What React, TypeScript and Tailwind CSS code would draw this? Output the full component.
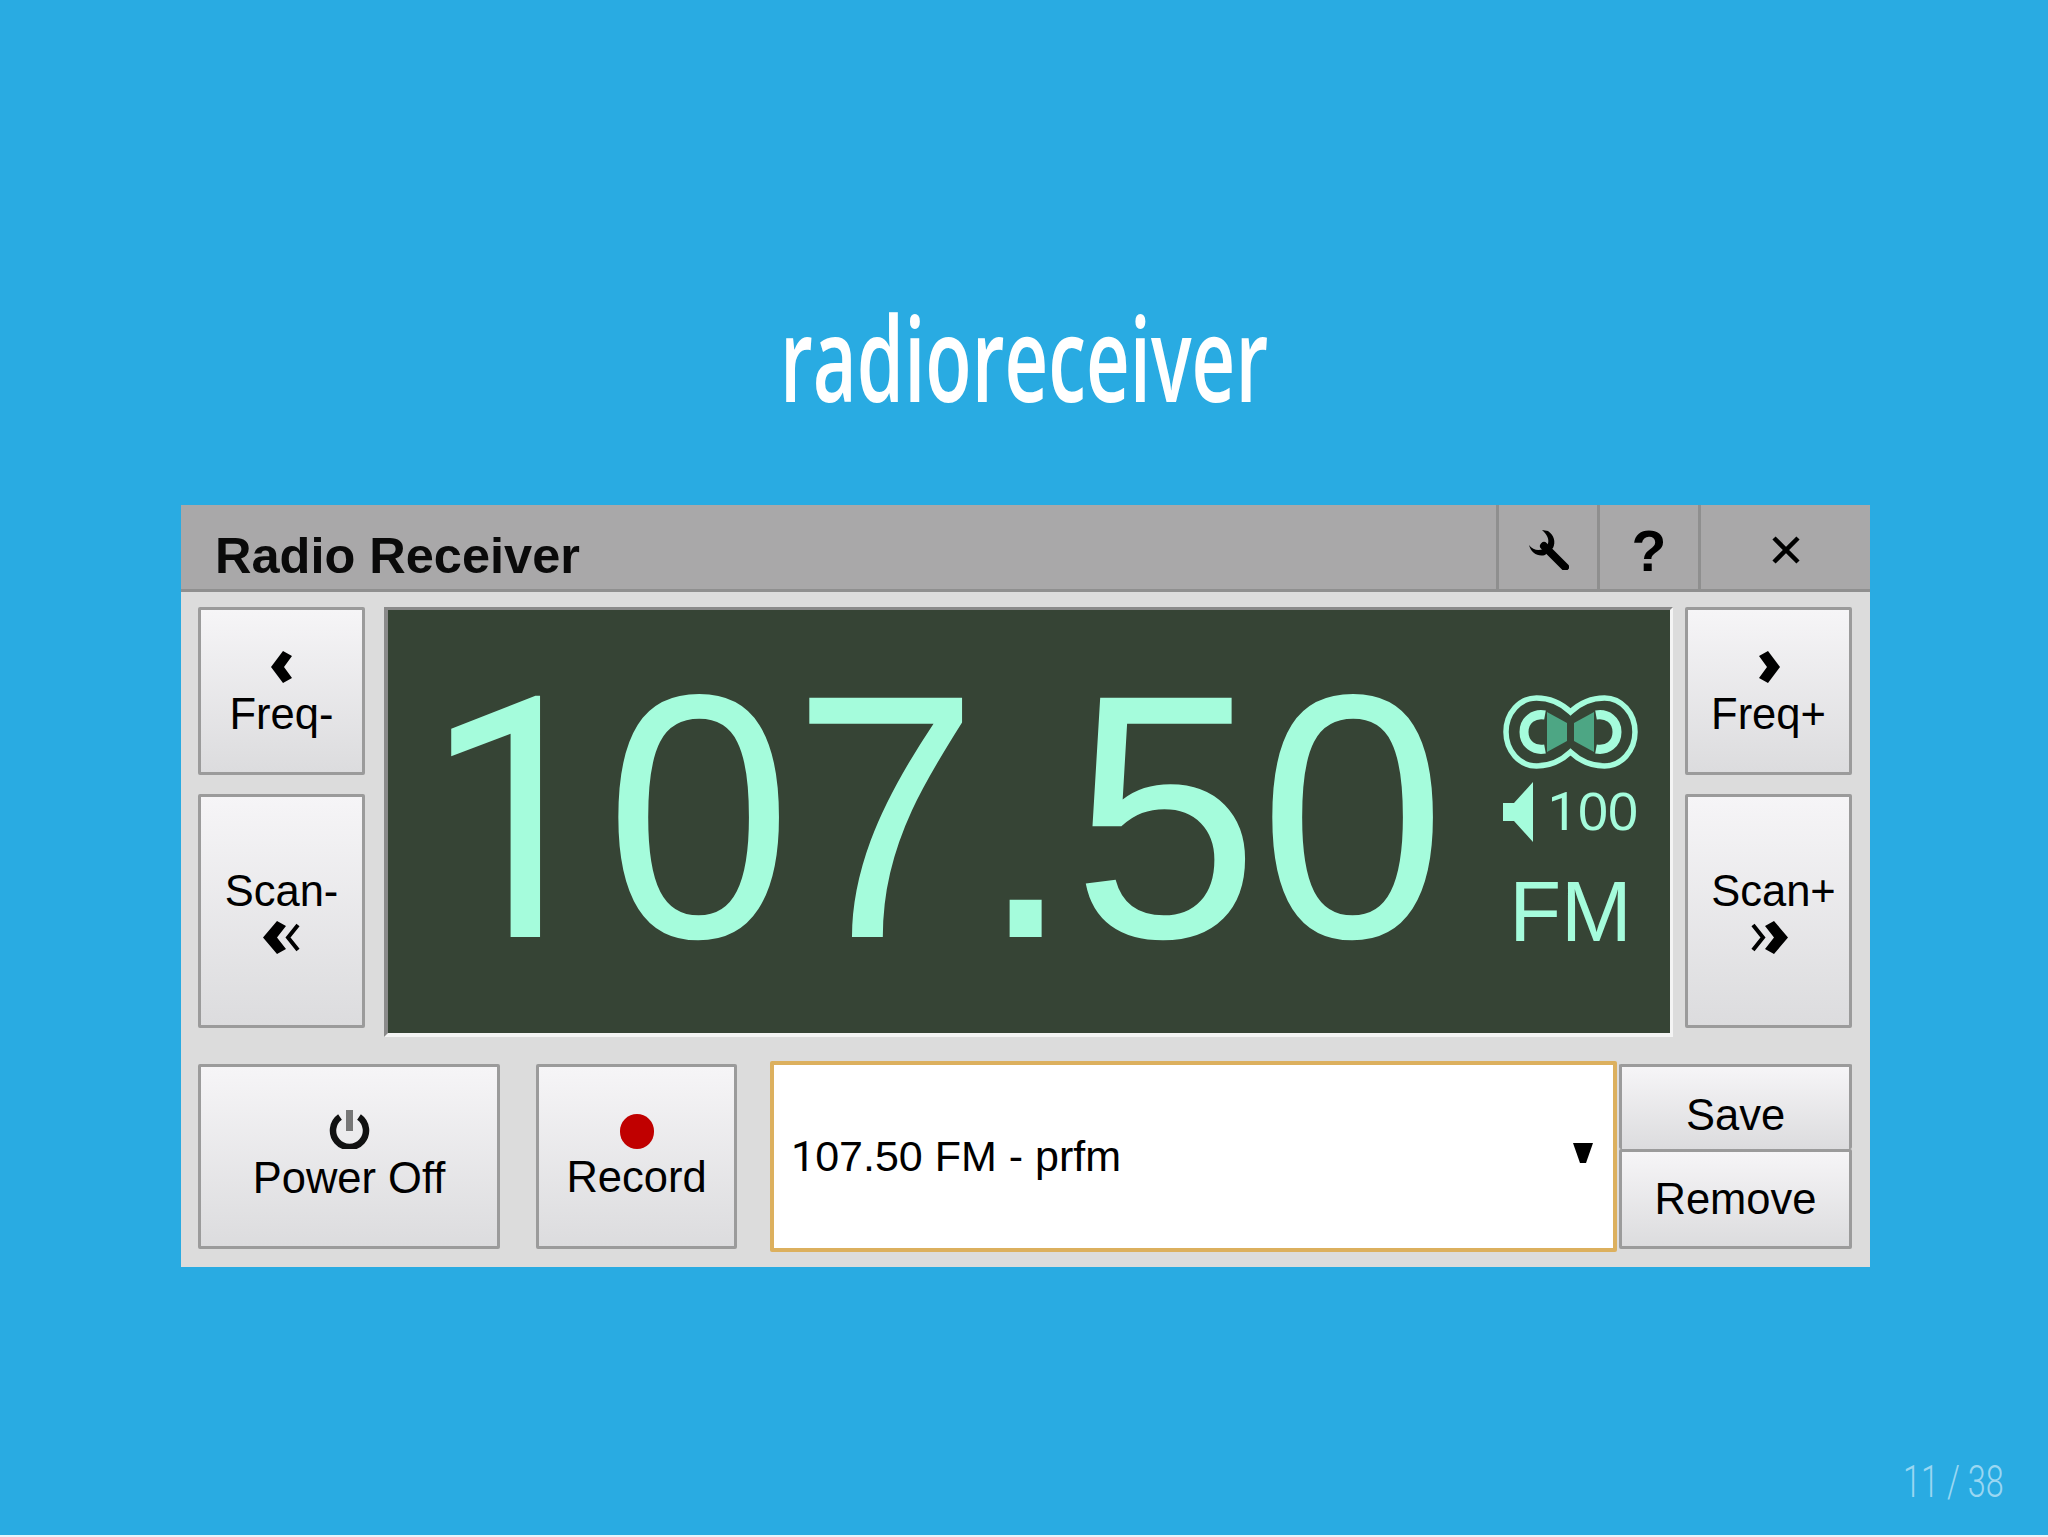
import type { ReactNode } from 'react';

const MINT = '#a5fcdc';

function PanelButton({ className, children }: { className: string; children: ReactNode }) {
  return (
    <div
      className={`flex flex-col items-center justify-center rounded-[2px] border-[3px] border-[#9b9b9b] bg-gradient-to-b from-[#f6f5f7] to-[#dcdcde] text-[43.5px] leading-[46px] text-black ${className}`}
    >
      {children}
    </div>
  );
}

// the panel font draws its 1 without a foot, Liberation does not
function One({ className = '' }: { className?: string }) {
  return <span className={`[font-family:Roboto,sans-serif] ${className}`}>1</span>;
}

function Chevron({ dir }: { dir: 'left' | 'right' }) {
  return (
    <svg width="22" height="32" viewBox="0 0 22 32" className={dir === 'right' ? 'mb-[8px] -scale-x-100' : 'mb-[8px]'}>
      <path d="M12 0 L21 5 L13 16 L21 27 L12 32 L0 16 Z" fill="#000" />
    </svg>
  );
}

function DoubleChevron({ dir }: { dir: 'left' | 'right' }) {
  return (
    <svg width="38" height="33" viewBox="0 0 38 33" className={dir === 'right' ? 'mt-[7px] -scale-x-100' : 'mt-[7px]'}>
      <path d="M14 0 L23 5 L14 16.5 L23 28 L14 33 L0 16.5 Z" fill="#000" />
      <path d="M35 4 L25 16.5 L35 29" fill="none" stroke="#000" strokeWidth="4" />
    </svg>
  );
}

function StereoIcon() {
  return (
    <svg width="135" height="74" viewBox="0 0 135 74">
      <path
        d="M67.5 17 C58 8 46 3 33.5 3 A30.5 34 0 0 0 33.5 71 C46 71 58 66 67.5 57 C77 66 89 71 101.5 71 A30.5 34 0 0 0 101.5 3 C89 3 77 8 67.5 17 Z"
        fill="none"
        stroke={MINT}
        strokeWidth="5.5"
      />
      <path d="M42 20 C31 18 21 25 21 37 C21 49 31 56 42 54" fill="none" stroke={MINT} strokeWidth="9" />
      <path d="M93 20 C104 18 114 25 114 37 C114 49 104 56 93 54" fill="none" stroke={MINT} strokeWidth="9" />
      <path d="M44 17 L64 28 L64 46 L44 57 Z" fill="#4da684" />
      <path d="M91 17 L71 28 L71 46 L91 57 Z" fill="#4da684" />
    </svg>
  );
}

export default function App() {
  return (
    <div className="flex h-[1537px] w-[2048px] flex-col overflow-hidden bg-[#29abe2] [font-family:'Liberation_Sans',Arial,sans-serif]">
      {/* slide title */}
      <div className="flex h-[505px] justify-center pt-[287px]">
        <h1 className="h-[140px] scale-x-[0.644] text-[118px] leading-[140px] font-semibold text-white [font-family:'Open_Sans',sans-serif]">
          radioreceiver
        </h1>
      </div>

      {/* radio window */}
      <div className="ml-[181px] w-[1689px] bg-[#dcdcdc]">
        <div className="flex h-[87px] border-b-[3px] border-[#8f8f8f] bg-[#a9a8a9]">
          <div className="flex-1 pt-[22px] pl-[34px] text-[50.5px] leading-[58px] font-bold text-[#0a0a0a]">Radio Receiver</div>
          <div className="flex w-[101px] items-start justify-center border-l-[3px] border-[#8f8f8f] pt-[24px]">
            <svg width="41" height="41" viewBox="0 0 41 41">
              <path d="M16 17 L37 38" stroke="#000" strokeWidth="8" strokeLinecap="round" />
              <path d="M1 16 C6 23 15 22 19 17 C22 12 20 6 14 1 L20 2 C26 6 28 13 25 19 L17 26 C10 28 3 24 1 16 Z" fill="#000" />
            </svg>
          </div>
          <div className="flex w-[101px] items-start justify-center border-l-[3px] border-[#8f8f8f] pt-[13px] text-[57px] leading-[66px] font-bold text-black">?</div>
          <div className="flex w-[172px] items-start justify-center border-l-[3px] border-[#8f8f8f] pt-[31px]">
            <svg width="28" height="28" viewBox="0 0 28 28">
              <path d="M2 2 L26 26 M26 2 L2 26" stroke="#000" strokeWidth="4.5" />
            </svg>
          </div>
        </div>

        <div className="flex flex-col gap-[24px] pt-[15px] pr-[18px] pb-[15px] pl-[17px]">
          {/* tuner row */}
          <div className="flex h-[430px]">
            <div className="flex w-[167px] flex-col gap-[19px]">
              <PanelButton className="h-[168px] pt-[6px]">
                <Chevron dir="left" />
                <span>Freq-</span>
              </PanelButton>
              <PanelButton className="h-[234px]">
                <span>Scan-</span>
                <DoubleChevron dir="left" />
              </PanelButton>
            </div>

            <div className="mr-[12px] ml-[19px] flex h-[430px] w-[1289px] border-t-[3px] border-r-[3px] border-b-[4px] border-l-[4px] border-t-[#8a8a8a] border-r-[#f4f4f4] border-b-[#f4f4f4] border-l-[#8a8a8a] bg-[#364435] pl-[28px] text-[#a5fcdc]">
              <div className="scale-y-[1.035] pt-[12px] text-[336px] leading-[390px]">
                <One className="mr-[-2px] ml-[8px] text-[326px]" />
                07.50
              </div>
              <div className="ml-[57px] flex w-[135px] flex-col items-center pt-[85px]">
                <StereoIcon />
                <div className="mt-[12px] flex w-[135px] items-center justify-between">
                  <svg width="30" height="60" viewBox="0 0 30 60">
                    <path d="M0 21 L11 21 L30 0 L30 60 L11 39 L0 39 Z" fill={MINT} />
                  </svg>
                  <span className="text-[54px] leading-[60px]">
                    <One />
                    00
                  </span>
                </div>
                <div className="mt-[21px] text-[85px] leading-[98px]">FM</div>
              </div>
            </div>

            <div className="flex w-[167px] flex-col gap-[19px]">
              <PanelButton className="h-[168px] pt-[6px]">
                <Chevron dir="right" />
                <span>Freq+</span>
              </PanelButton>
              <PanelButton className="h-[234px]">
                <span className="ml-[10px]">Scan+</span>
                <DoubleChevron dir="right" />
              </PanelButton>
            </div>
          </div>

          {/* controls row */}
          <div className="flex h-[191px] items-center">
            <PanelButton className="h-[185px] w-[302px]">
              <svg width="41" height="40" viewBox="0 0 41 40" className="mb-[6px]">
                <path d="M11 8 A16.5 16.5 0 1 0 30 8" fill="none" stroke="#111" strokeWidth="6.5" />
                <path d="M20.5 1 L20.5 22" stroke="#777" strokeWidth="7" />
              </svg>
              <span className="mb-[3px]">Power Off</span>
            </PanelButton>
            <PanelButton className="ml-[36px] h-[185px] w-[201px]">
              <div className="mb-[5px] h-[35px] w-[34px] rounded-full bg-[#c00000]" />
              <span>Record</span>
            </PanelButton>
            <div className="ml-[33px] flex h-[191px] w-[847px] items-center justify-between rounded-[2px] border-[4px] border-[#dcb05e] bg-white pr-[20px] pl-[17px] text-[43px] text-black">
              <span>
                <One />
                07.50 FM - prfm
              </span>
              <svg width="20" height="20" viewBox="0 0 20 20" className="mb-[8px]">
                <path d="M0 0 L20 0 L13 20 L7 20 Z" fill="#000" />
              </svg>
            </div>
            <div className="ml-[2px] flex w-[233px] flex-col">
              <PanelButton className="h-[85px] border-b-0 pt-[14px]">Save</PanelButton>
              <PanelButton className="h-[100px]">Remove</PanelButton>
            </div>
          </div>
        </div>
      </div>

      {/* page number */}
      <div className="flex flex-1 items-start justify-end pt-[189px] pr-[44px]">
        <span className="origin-right scale-x-[0.72] text-[45px] leading-[52px] font-light text-[#9ad7f2] [font-family:Roboto,sans-serif]">11 / 38</span>
      </div>
      <div className="h-[2px] bg-[#e8f4fb]" />
    </div>
  );
}
